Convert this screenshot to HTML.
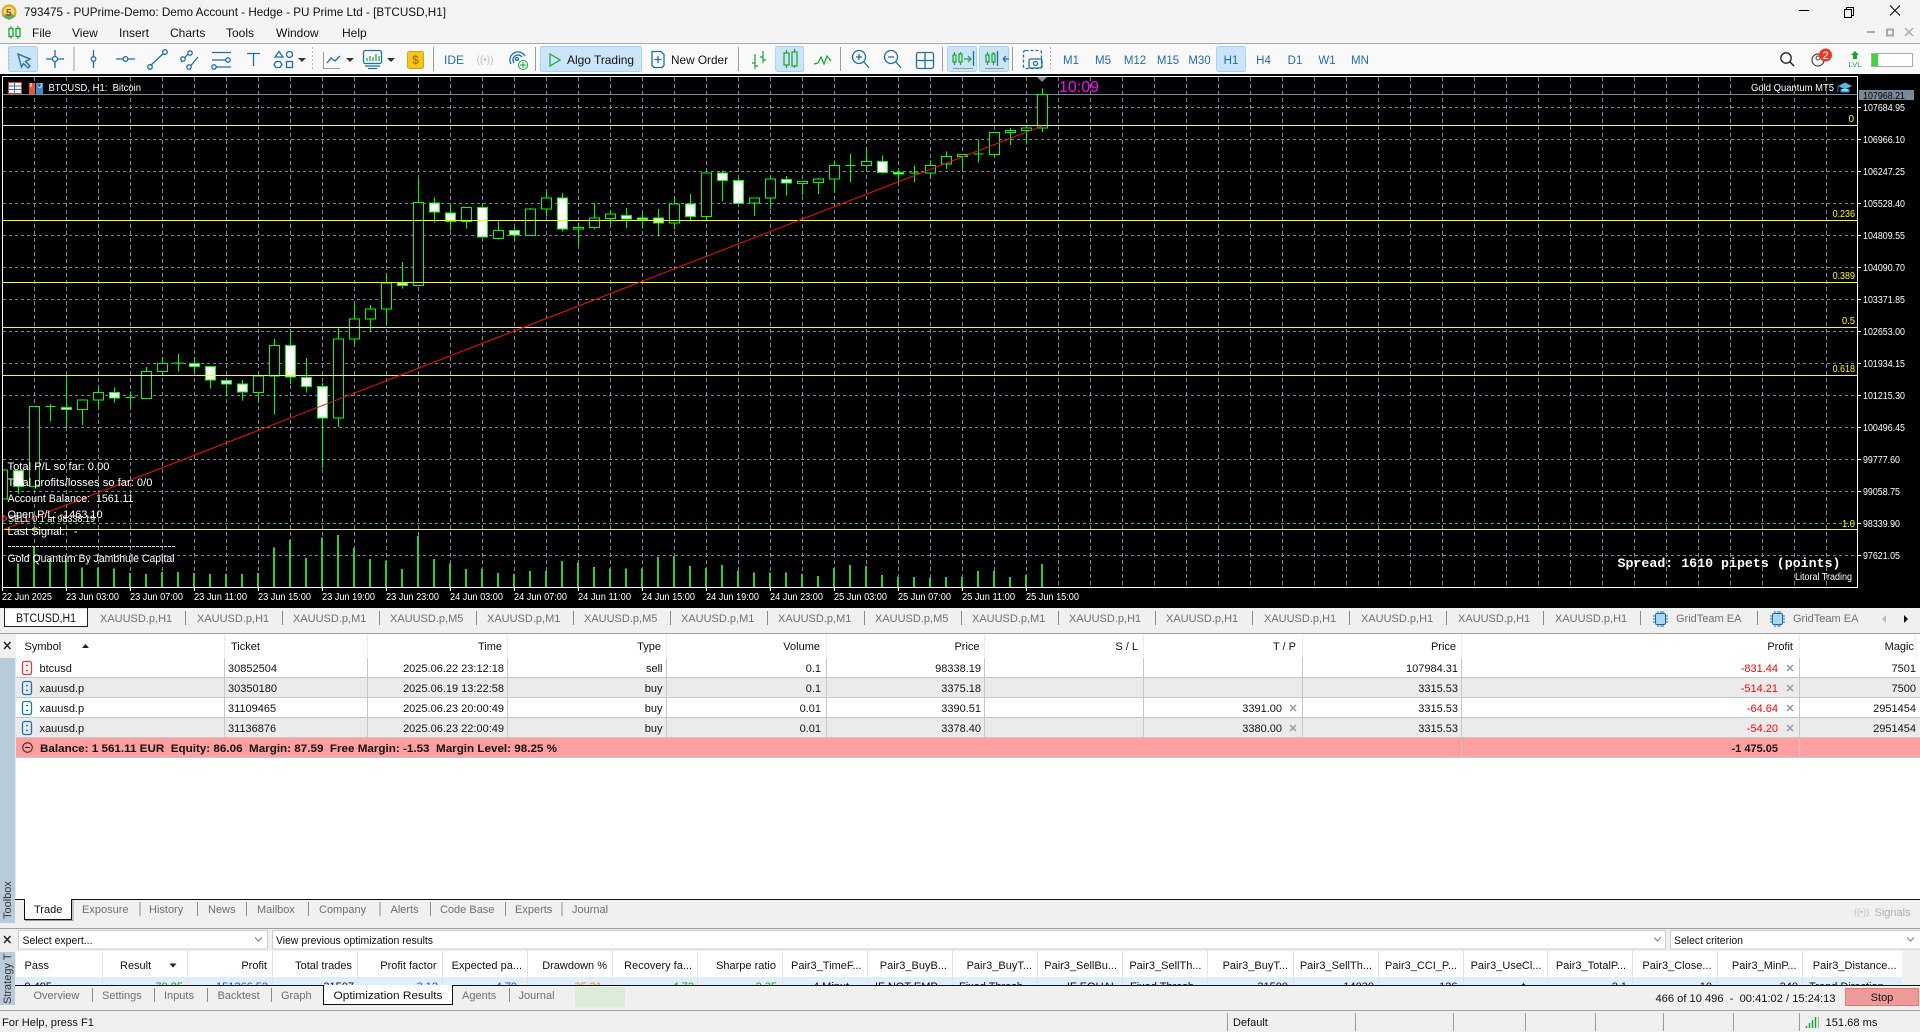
<!DOCTYPE html>
<html lang="en"><head><meta charset="utf-8"><title>793475 - PUPrime-Demo</title>
<style>
html,body{margin:0;padding:0;background:#000;width:1920px;height:1032px;overflow:hidden}
svg{display:block;position:absolute;left:0;top:0}
text{font-family:"Liberation Sans",sans-serif;font-size:11px;fill:#111;white-space:pre}
.e{text-anchor:end}.m{text-anchor:middle}
.g{fill:#6f6f6f}
.w{fill:#fff;font-size:10px}
.n{font-size:12px;fill:#111}
.tf{font-size:11.5px;fill:#1f6ea6}
.y{fill:#ff0;font-size:10px}
.i{fill:none;stroke:#1e6ea7;stroke-width:1.3}
.k{fill:none;stroke:#16a534;stroke-width:1.2}
.ns{vector-effect:non-scaling-stroke;shape-rendering:crispEdges}
.b{font-weight:bold;fill:#111}
</style></head><body>
<svg width="1920" height="1032" viewBox="0 0 1920 1032" xmlns="http://www.w3.org/2000/svg">
<defs>
<pattern id="pv" patternUnits="userSpaceOnUse" x="0" y="77" width="32" height="7"><rect x="2" y="0" width="1" height="4" fill="#778899"/></pattern>
<pattern id="ph" patternUnits="userSpaceOnUse" x="3" y="11" width="6" height="32"><rect x="0" y="0" width="3" height="1" fill="#778899"/></pattern>
<clipPath id="cc"><rect x="3" y="77" width="1854" height="510"/></clipPath>
<clipPath id="cr"><rect x="16" y="977" width="1886" height="8"/></clipPath>
</defs>

<!-- chrome backgrounds -->
<rect x="0" y="0" width="1920" height="23" fill="#f3f3f3"/>
<rect x="0" y="23" width="1920" height="20" fill="#f4f4f4"/>
<rect x="0" y="43" width="1920" height="1" fill="#a8a8a8"/>
<rect x="0" y="44" width="1920" height="30" fill="#f9f9f9"/>
<rect x="0" y="74" width="1920" height="534" fill="#000"/>

<!-- title -->
<circle cx="9" cy="12" r="7.5" fill="#dba920"/><circle cx="9" cy="12" r="5.5" fill="#f3d67a"/><path d="M2 16 L9 20 L16 16 L12 14 L6 14Z" fill="#6aa86a"/>
<text x="6" y="16" style="font-size:10px;font-weight:bold;fill:#7a5a10">5</text>
<text x="24" y="16" textLength="422" lengthAdjust="spacingAndGlyphs" class="n">793475 - PUPrime-Demo: Demo Account - Hedge - PU Prime Ltd - [BTCUSD,H1]</text>
<path d="M1799 10.5H1809" stroke="#000" fill="none"/>
<path d="M1844.5 9.5h7v8h-7zM1846.5 9.5v-2h7v8h-2" stroke="#000" fill="none"/>
<path d="M1890 5.5L1900 15.5M1900 5.5L1890 15.5" stroke="#000" fill="none"/>
<path d="M1867 32H1875" stroke="#aaa" stroke-width="2"/><path d="M1887 29.5h6v6h-6z" stroke="#aaa" stroke-width="2" fill="none"/><path d="M1905 28L1913 36M1913 28L1905 36" stroke="#aaa" stroke-width="1.4"/>

<!-- menu -->
<path d="M11 26V28.5M11 36.5V39M18 26V28.5M18 36.5V39" stroke="#16a534"/><rect x="9" y="28.5" width="4" height="8" fill="none" stroke="#16a534" stroke-width="1.3"/><rect x="16" y="28.5" width="4" height="8" fill="none" stroke="#16a534" stroke-width="1.3"/>
<text x="32" y="37" class="n">File</text><text x="72" y="37" class="n">View</text><text x="119" y="37" class="n">Insert</text><text x="170" y="37" class="n">Charts</text><text x="226" y="37" class="n">Tools</text><text x="276" y="37" class="n">Window</text><text x="342" y="37" class="n">Help</text>

<!-- toolbar buttons -->
<g fill="#cce4f7" stroke="#a9d2f2"><rect x="8.5" y="46.5" width="29" height="25" rx="2"/><rect x="540.5" y="46.5" width="101" height="25" rx="2"/><rect x="775.5" y="46.5" width="28" height="25" rx="2"/><rect x="947.5" y="46.5" width="29" height="25" rx="2"/><rect x="979.5" y="46.5" width="29" height="25" rx="2"/><rect x="1216.5" y="46.5" width="29" height="25" rx="2"/></g>
<g stroke="#9a9a9a"><path d="M74 47V71M433.5 47V71M535.5 47V71M738.5 47V71M840.5 47V71M942.5 47V71M1012.5 47V71"/></g>
<path d="M9 47V71M312.5 47V71M1050.5 47V71" stroke="#bbb" stroke-dasharray="2 2"/>
<g class="i">
<path d="M18 54L30 59L25.5 61.5L30 66L28 68L23.5 63.5L21.5 67Z"/>
<path d="M46 59H64M55 50V68"/><circle cx="55" cy="59" r="2.5" fill="#f9f9f9"/>
<path d="M93.5 50V68"/><circle cx="93.5" cy="59" r="2.3" fill="#f9f9f9"/>
<path d="M116 59H135"/><circle cx="125.5" cy="59" r="2.3" fill="#f9f9f9"/>
<path d="M150 66L165 52"/><circle cx="150" cy="67" r="2.3" fill="#f9f9f9"/><circle cx="165" cy="52" r="2.3" fill="#f9f9f9"/>
<path d="M181 62L188 54M188 69L198 57"/><circle cx="183" cy="59" r="2.2" fill="#f9f9f9"/><circle cx="190" cy="53" r="2.2" fill="#f9f9f9"/><circle cx="189" cy="67" r="2.2" fill="#f9f9f9"/>
<path d="M212 52.5H231M212 60H227M216 67H231"/><circle cx="228" cy="60" r="2.2" fill="#f9f9f9"/><circle cx="214" cy="67" r="2.2" fill="#f9f9f9"/>
<path d="M247 53.5H260M253.5 53.5V66"/>
<path d="M279 51.5L283 57H275Z"/><circle cx="289.5" cy="54.5" r="3"/><path d="M276 61.5h4l2 3-2 3h-4l-2-3z"/><rect x="286.5" y="61.5" width="6" height="6"/>
</g>
<g fill="#333"><path d="M298 58H306L302 62Z"/><path d="M346 58H354L350 62Z"/><path d="M387 58H395L391 62Z"/></g>
<path d="M323.5 52V68.5H340" fill="none" stroke="#999"/>
<path d="M327 63L331 58L335 61L340 56" class="i"/>
<rect x="363.5" y="50.5" width="18" height="13" rx="2" class="i"/><path d="M365 66H380M368 68.5H377" class="i"/><path d="M367 61V58M370 61V56M373 61V57M376 61V54M379 61V56" class="k"/>
<rect x="407.5" y="51.5" width="16" height="17" rx="2" fill="#f7c520" stroke="#dca20c"/><text x="415.5" y="64" class="m" style="font-size:12px;fill:#a87a08;font-weight:bold">$</text>
<text x="444" y="64" class="tf" style="font-size:12px">IDE</text>
<text x="485" y="63" class="m" style="font-size:10px;fill:#bdbdbd">((•))</text>
<path d="M511 64A8 8 0 1 1 525 56M514 63A5 5 0 1 1 522 57" class="i"/><circle cx="517" cy="59" r="1.5" class="i"/><circle cx="523" cy="65" r="4.5" fill="#f9f9f9" stroke="#16a534"/><path d="M523 62V68M520 65H526" stroke="#16a534"/>
<path d="M550 54L560 60L550 66Z" fill="none" stroke="#1fa84c" stroke-width="1.3"/>
<text x="567" y="64" class="n" textLength="67" lengthAdjust="spacingAndGlyphs">Algo Trading</text>
<path d="M652 51.5h9l3 3v11l-2 2h-8l-2-2z" fill="#fff" class="i"/><path d="M658 56V63M654.5 59.5H661.5" class="i"/>
<text x="671" y="64" class="n" textLength="57" lengthAdjust="spacingAndGlyphs">New Order</text>
<path d="M755 54V69M752 63H755M755 66H758M763 51V63M760 57H763M763 60H766" class="k"/>
<g class="k"><path d="M786.5 50V68M794.5 49V68"/><rect x="784" y="53" width="5" height="12" style="fill:#cce4f7"/><rect x="792" y="52" width="5" height="14" style="fill:#cce4f7"/></g>
<path d="M814 64L818 63L821 57L824 64L827 56L831 61" class="k"/>
<g class="i"><circle cx="859" cy="57" r="6.5"/><path d="M864 62L869 68M856 57H862M859 54V60"/><circle cx="891" cy="57" r="6.5"/><path d="M896 62L901 68M888 57H894"/><rect x="916.5" y="52.5" width="17" height="16" rx="2"/><path d="M925 52.5V68.5M916.5 60.5H933.5"/></g>
<g class="k"><path d="M954.5 52V65M960.5 52V65"/><rect x="953" y="55" width="3" height="7" style="fill:#cce4f7"/><rect x="959" y="54" width="3" height="8" style="fill:#cce4f7"/><path d="M964 59H971M968 56L971 59L968 62"/></g><path d="M973.5 51V66" class="i"/><path d="M953 68.5H973" stroke="#999"/>
<g class="k"><path d="M987.5 52V65M993.5 52V65"/><rect x="986" y="55" width="3" height="7" style="fill:#cce4f7"/><rect x="992" y="54" width="3" height="8" style="fill:#cce4f7"/></g><path d="M997.5 51V66M1003 59H1009M1003 59L1006 56M1003 59L1006 62" class="i"/><path d="M985 68.5H1004" stroke="#999"/>
<rect x="1023.5" y="50.5" width="18" height="18" rx="2" class="i" stroke-dasharray="3 2"/><rect x="1029" y="59" width="13" height="9" rx="1.5" fill="#f9f9f9" class="i"/><circle cx="1035.5" cy="63.5" r="2" class="i"/>
<text x="1071" y="64" class="tf m">M1</text><text x="1103" y="64" class="tf m">M5</text><text x="1135" y="64" class="tf m">M12</text><text x="1168" y="64" class="tf m">M15</text><text x="1199.5" y="64" class="tf m">M30</text><text x="1231" y="64" class="tf m">H1</text><text x="1263.5" y="64" class="tf m">H4</text><text x="1295" y="64" class="tf m">D1</text><text x="1327" y="64" class="tf m">W1</text><text x="1360" y="64" class="tf m">MN</text>
<circle cx="1786" cy="58" r="5.2" fill="none" stroke="#222" stroke-width="1.3"/><path d="M1790 62L1794 66" stroke="#222" stroke-width="1.5"/>
<circle cx="1818" cy="60" r="6" fill="none" stroke="#444" stroke-width="1.2"/><circle cx="1818" cy="58" r="2" fill="none" stroke="#444"/><circle cx="1825.5" cy="55" r="6.5" fill="#e5392a"/><text x="1825.5" y="59" class="m" style="fill:#fff;font-size:11px">2</text>
<path d="M1855 51L1859 55H1857V59H1853V55H1851Z" fill="#16a534"/><text x="1855" y="67" class="m" style="font-size:7.5px;fill:#16a534">LVL</text>
<rect x="1871.5" y="53.5" width="41" height="13" fill="#fff" stroke="#aaa"/><rect x="1872" y="54" width="6" height="12" fill="#3cd63c"/>

<!-- chart -->
<rect x="34" y="77" width="1793" height="510" fill="url(#pv)"/>
<rect x="3" y="107" width="1854" height="449" fill="url(#ph)"/>
<path d="M2.5 76.5H1857.5V587.5H2.5Z" fill="none" stroke="#fff"/>
<path d="M3 94.5H1857" stroke="#778899"/>

<g clip-path="url(#cc)">
<!-- volumes -->
<g transform="translate(0,60) scale(1,.357)"><path class="ns" fill="none" stroke="#32cd32" stroke-width="2" d="M18 1410V1477M34 1362V1477M50 1395V1477M66 1395V1477M82 1422V1477M98 1422V1477M114 1425V1477M130 1437V1477M146 1440V1477M162 1434V1477M178 1434V1477M194 1437V1477M210 1440V1477M226 1440V1477M242 1440V1477M258 1437V1477M274 1365V1477M290 1344V1477M306 1395V1477M322 1337V1477M338 1331V1477M354 1367V1477M370 1398V1477M386 1404V1477M402 1426V1477M418 1334V1477M434 1398V1477M450 1410V1477M466 1426V1477M482 1426V1477M498 1437V1477M514 1440V1477M530 1432V1477M546 1432V1477M562 1404V1477M578 1407V1477M594 1420V1477M610 1425V1477M626 1425V1477M642 1425V1477M658 1392V1477M674 1390V1477M690 1417V1477M706 1423V1477M722 1415V1477M738 1431V1477M754 1435V1477M770 1435V1477M786 1435V1477M802 1440V1477M818 1445V1477M834 1423V1477M850 1415V1477M866 1418V1477M882 1443V1477M898 1448V1477M914 1448V1477M930 1450V1477M946 1448V1477M962 1448V1477M978 1432V1477M994 1431V1477M1010 1448V1477M1026 1442V1477M1042 1412V1477"/></g>
<!-- candles -->
<g transform="translate(.5,60) scale(1,.357)" stroke="#00ff00" stroke-width="1">
<path class="ns" fill="none" d="M18 1150V1215M50 963V1013M66 885V1032M82 953V1022M98 918V976M114 918V960M130 928V975M146 860V948M162 833V885M178 824V873M194 833V875M210 859V920M226 898V942M242 897V954M258 885V958M274 782V993M290 762V908M306 835V932M322 905V1143M338 750V1028M354 680V795M370 686V762M386 600V740M402 566V640M418 334V631M434 385V455M450 403V478M466 413V472M498 452V503M514 467V505M530 415V491M546 365V438M562 372V481M578 455V520M594 400V475M610 420V461M626 415V470M642 430V472M658 418V495M674 382V475M690 376V448M706 317V450M722 310V395M738 330V402M754 385V437M770 328V417M786 325V380M802 340V378M818 330V375M834 282V371M850 264V343M866 245V310M882 267V318M898 305V342M914 295V342M930 282V332M946 256V305M962 265V304M978 222V287M994 203V272M1010 190V238M1026 185V236M1042 80V201"/>
<path class="ns" fill="#000" d="M-3 1148H7V1230H-3ZM29 970H39V1195H29ZM77 953H87V979H77ZM93 931H103V953H93ZM141 872H151V948H141ZM157 850H167V873H157ZM253 885H263V931H253ZM269 800H279V885H269ZM333 782H343V1003H333ZM349 726H359V782H349ZM365 698H375V726H365ZM381 625H391V698H381ZM413 399H423V631H413ZM461 413H471V453H461ZM493 477H503V500H493ZM525 418H535V491H525ZM541 387H551V418H541ZM573 469H583V474H573ZM589 443H599V469H589ZM605 432H615V444H605ZM669 404H679V457H669ZM701 317H711V438H701ZM749 387H759V401H749ZM765 334H775V387H765ZM797 340H807V346H797ZM813 334H823V343H813ZM829 295H839V334H829ZM861 285H871V296H861ZM925 295H935V317H925ZM941 271H951V292H941ZM957 265H967V270H957ZM989 203H999V265H989ZM1005 197H1015V203H1005ZM1021 191H1031V197H1021ZM1037 97H1047V191H1037Z"/>
<path class="ns" fill="#fff" d="M13 1150H23V1195H13ZM61 973H71V979H61ZM109 932H119V947H109ZM189 850H199V858H189ZM205 859H215V897H205ZM221 898H231V908H221ZM237 908H247V930H237ZM285 800H295V888H285ZM301 889H311V914H301ZM317 915H327V1003H317ZM397 625H407V631H397ZM429 400H439V426H429ZM445 428H455V452H445ZM477 413H487V496H477ZM509 478H519V490H509ZM557 387H567V474H557ZM621 435H631V446H621ZM637 443H647V447H637ZM653 443H663V457H653ZM685 404H695V438H685ZM717 317H727V338H717ZM733 338H743V402H733ZM781 335H791V345H781ZM877 285H887V315H877ZM893 315H903V320H893Z"/>
<path class="ns" fill="none" d="M45 970H55M125 945H135M173 849H183M909 317H919M845 295H855M973 264H983"/>
</g>
<!-- objects -->
<path d="M3 523.5H1857" stroke="#2fd12f" stroke-dasharray="3 3"/>
<path d="M3 125.5H1857M3 220.5H1857M3 282.5H1857M3 327.5H1857M3 375.5H1857M3 529.5H1857" stroke="#ffff00"/>
<path d="M2 530L1042 126" stroke="#f01010" stroke-width="1"/>
</g>

<!-- chart header -->
<rect x="8.5" y="82.5" width="13" height="11" fill="#fff" stroke="#e03a2a"/><path d="M9 86H21M9 89.5H21M14.5 83V93" stroke="#2a6fc0"/>
<path d="M29 83h6v11h-6z" fill="#e8503a"/><path d="M36 83h7v11h-7z" fill="#3a8dd0"/><path d="M31 87V83M38 87h3v-4" stroke="#fff"/>
<text x="48.5" y="91" class="w" textLength="92.5" lengthAdjust="spacingAndGlyphs">BTCUSD, H1:  Bitcoin</text>
<text x="1059" y="92" textLength="40" lengthAdjust="spacingAndGlyphs" style="font-size:16px;fill:#ff00ff">10:09</text>
<path d="M1037 77H1047L1042 82Z" fill="#778899"/>
<text x="1751" y="91" class="w" textLength="83" lengthAdjust="spacingAndGlyphs">Gold Quantum MT5</text>
<path d="M1838 86L1845 82.5L1852 86L1845 89.5Z" fill="#5ab4e6"/><path d="M1841 89V92H1849V89" fill="#8fd0f0" stroke="#2a7fc0"/><path d="M1838 86V92" stroke="#2a7fc0"/>

<!-- level labels -->
<text x="1854" y="122" class="y e">0</text>
<text x="1855" y="217" class="y e" textLength="22.4" lengthAdjust="spacingAndGlyphs">0.236</text>
<text x="1855" y="279" class="y e" textLength="22.4" lengthAdjust="spacingAndGlyphs">0.389</text>
<text x="1855" y="324" class="y e" textLength="13" lengthAdjust="spacingAndGlyphs">0.5</text>
<text x="1855" y="372" class="y e" textLength="22.4" lengthAdjust="spacingAndGlyphs">0.618</text>
<text x="1855" y="527" class="y e" textLength="13" lengthAdjust="spacingAndGlyphs">1.0</text>

<!-- price axis -->
<path d="M1858 107.5h3M1858 139.5h3M1858 171.5h3M1858 203.5h3M1858 235.5h3M1858 267.5h3M1858 299.5h3M1858 331.5h3M1858 363.5h3M1858 395.5h3M1858 427.5h3M1858 459.5h3M1858 491.5h3M1858 523.5h3M1858 555.5h3" stroke="#fff"/>
<rect x="1859" y="90" width="55" height="10" fill="#778899"/>
<text x="1863" y="99" class="w" textLength="42" lengthAdjust="spacingAndGlyphs" style="fill:#000">107968.21</text>
<g class="w">
<text x="1863" y="111" class="w" textLength="42" lengthAdjust="spacingAndGlyphs">107684.95</text>
<text x="1863" y="143" class="w" textLength="42" lengthAdjust="spacingAndGlyphs">106966.10</text>
<text x="1863" y="175" class="w" textLength="42" lengthAdjust="spacingAndGlyphs">106247.25</text>
<text x="1863" y="207" class="w" textLength="42" lengthAdjust="spacingAndGlyphs">105528.40</text>
<text x="1863" y="239" class="w" textLength="42" lengthAdjust="spacingAndGlyphs">104809.55</text>
<text x="1863" y="271" class="w" textLength="42" lengthAdjust="spacingAndGlyphs">104090.70</text>
<text x="1863" y="303" class="w" textLength="42" lengthAdjust="spacingAndGlyphs">103371.85</text>
<text x="1863" y="335" class="w" textLength="42" lengthAdjust="spacingAndGlyphs">102653.00</text>
<text x="1863" y="367" class="w" textLength="42" lengthAdjust="spacingAndGlyphs">101934.15</text>
<text x="1863" y="399" class="w" textLength="42" lengthAdjust="spacingAndGlyphs">101215.30</text>
<text x="1863" y="431" class="w" textLength="42" lengthAdjust="spacingAndGlyphs">100496.45</text>
<text x="1863" y="463" class="w" textLength="37" lengthAdjust="spacingAndGlyphs">99777.60</text>
<text x="1863" y="495" class="w" textLength="37" lengthAdjust="spacingAndGlyphs">99058.75</text>
<text x="1863" y="527" class="w" textLength="37" lengthAdjust="spacingAndGlyphs">98339.90</text>
<text x="1863" y="559" class="w" textLength="37" lengthAdjust="spacingAndGlyphs">97621.05</text>
</g>

<!-- time axis -->
<path d="M2.5 588v3M66.5 588v3M130.5 588v3M194.5 588v3M258.5 588v3M322.5 588v3M386.5 588v3M450.5 588v3M514.5 588v3M578.5 588v3M642.5 588v3M706.5 588v3M770.5 588v3M834.5 588v3M898.5 588v3M962.5 588v3M1026.5 588v3" stroke="#fff"/>
<text x="2" y="600" class="w" textLength="50" lengthAdjust="spacingAndGlyphs">22 Jun 2025</text>
<text x="66" y="600" class="w" textLength="53" lengthAdjust="spacingAndGlyphs">23 Jun 03:00</text>
<text x="130" y="600" class="w" textLength="53" lengthAdjust="spacingAndGlyphs">23 Jun 07:00</text>
<text x="194" y="600" class="w" textLength="53" lengthAdjust="spacingAndGlyphs">23 Jun 11:00</text>
<text x="258" y="600" class="w" textLength="53" lengthAdjust="spacingAndGlyphs">23 Jun 15:00</text>
<text x="322" y="600" class="w" textLength="53" lengthAdjust="spacingAndGlyphs">23 Jun 19:00</text>
<text x="386" y="600" class="w" textLength="53" lengthAdjust="spacingAndGlyphs">23 Jun 23:00</text>
<text x="450" y="600" class="w" textLength="53" lengthAdjust="spacingAndGlyphs">24 Jun 03:00</text>
<text x="514" y="600" class="w" textLength="53" lengthAdjust="spacingAndGlyphs">24 Jun 07:00</text>
<text x="578" y="600" class="w" textLength="53" lengthAdjust="spacingAndGlyphs">24 Jun 11:00</text>
<text x="642" y="600" class="w" textLength="53" lengthAdjust="spacingAndGlyphs">24 Jun 15:00</text>
<text x="706" y="600" class="w" textLength="53" lengthAdjust="spacingAndGlyphs">24 Jun 19:00</text>
<text x="770" y="600" class="w" textLength="53" lengthAdjust="spacingAndGlyphs">24 Jun 23:00</text>
<text x="834" y="600" class="w" textLength="53" lengthAdjust="spacingAndGlyphs">25 Jun 03:00</text>
<text x="898" y="600" class="w" textLength="53" lengthAdjust="spacingAndGlyphs">25 Jun 07:00</text>
<text x="962" y="600" class="w" textLength="53" lengthAdjust="spacingAndGlyphs">25 Jun 11:00</text>
<text x="1026" y="600" class="w" textLength="53" lengthAdjust="spacingAndGlyphs">25 Jun 15:00</text>

<!-- overlay text -->
<text x="7.5" y="470" class="w" textLength="102" lengthAdjust="spacingAndGlyphs" style="font-size:11px">Total P/L so far: 0.00</text>
<text x="7.5" y="486" class="w" textLength="145" lengthAdjust="spacingAndGlyphs" style="font-size:11px">Total profits/losses so far: 0/0</text>
<text x="7.5" y="502" class="w" textLength="126" lengthAdjust="spacingAndGlyphs" style="font-size:11px">Account Balance:  1561.11</text>
<text x="7.5" y="518" class="w" textLength="95" lengthAdjust="spacingAndGlyphs" style="font-size:11px">Open P/L: -1463.10</text>
<text x="8" y="522" class="w" textLength="87" lengthAdjust="spacingAndGlyphs" style="font-size:9px">SELL 0.1 at 98338.19</text>
<path d="M3 515L7 518.5L3 522Z" fill="none" stroke="#e04040"/>
<text x="7.5" y="535" class="w" textLength="70" lengthAdjust="spacingAndGlyphs" style="font-size:11px">Last Signal:   -</text>
<path d="M8 546.5H176" stroke="#ddd" stroke-dasharray="3 1"/>
<text x="7.5" y="562" class="w" textLength="167" lengthAdjust="spacingAndGlyphs" style="font-size:11px">Gold Quantum By Jambhule Capital</text>
<text x="1617.5" y="567" textLength="223" lengthAdjust="spacingAndGlyphs" style="font-family:'Liberation Mono',monospace;font-weight:bold;font-size:13px;fill:#fff">Spread: 1610 pipets (points)</text>
<text x="1795" y="580" class="w" textLength="57" lengthAdjust="spacingAndGlyphs">Litoral Trading</text>

<!-- chart tabs -->
<rect x="0" y="608" width="1920" height="25" fill="#f0f0f0"/>
<rect x="0" y="633" width="1920" height="1" fill="#a0a0a0"/>
<path d="M4.5 608.5H87.5V626.5H4.5Z" fill="#fff" stroke="#222"/><path d="M5 608.5H87" stroke="#ddd"/>
<text x="16" y="622" textLength="60" lengthAdjust="spacingAndGlyphs" style="font-size:11.5px">BTCUSD,H1</text>
<path d="M185.5 611V625M282.5 611V625M379.5 611V625M476.5 611V625M573.5 611V625M670.5 611V625M767.5 611V625M864.5 611V625M961.5 611V625M1058.5 611V625M1155.5 611V625M1252.5 611V625M1349.5 611V625M1446.5 611V625M1543.5 611V625M1640.5 611V625M1757.5 611V625" stroke="#8a8a8a"/>
<g>
<text x="100" y="622" class="g">XAUUSD.p,H1</text><text x="197" y="622" class="g">XAUUSD.p,H1</text><text x="293" y="622" class="g">XAUUSD.p,M1</text><text x="390" y="622" class="g">XAUUSD.p,M5</text><text x="487" y="622" class="g">XAUUSD.p,M1</text><text x="584" y="622" class="g">XAUUSD.p,M5</text><text x="681" y="622" class="g">XAUUSD.p,M1</text><text x="778" y="622" class="g">XAUUSD.p,M1</text><text x="875" y="622" class="g">XAUUSD.p,M5</text><text x="972" y="622" class="g">XAUUSD.p,M1</text><text x="1069" y="622" class="g">XAUUSD.p,H1</text><text x="1166" y="622" class="g">XAUUSD.p,H1</text><text x="1264" y="622" class="g">XAUUSD.p,H1</text><text x="1361" y="622" class="g">XAUUSD.p,H1</text><text x="1458" y="622" class="g">XAUUSD.p,H1</text><text x="1555" y="622" class="g">XAUUSD.p,H1</text>
<text x="1676" y="622" class="g">GridTeam EA</text><text x="1793" y="622" class="g">GridTeam EA</text>
</g>
<g fill="#a9d8f5" stroke="#1a6aa8"><rect x="1655.5" y="613.5" width="10" height="11" rx="1.5"/><rect x="1772.5" y="613.5" width="10" height="11" rx="1.5"/></g>
<path d="M1653 616h2M1653 619h2M1653 622h2M1666 616h2M1666 619h2M1666 622h2M1658 611v2M1661 611v2M1663 611v2M1658 625v2M1661 625v2M1663 625v2M1770 616h2M1770 619h2M1770 622h2M1783 616h2M1783 619h2M1783 622h2M1775 611v2M1778 611v2M1780 611v2M1775 625v2M1778 625v2M1780 625v2" stroke="#1a6aa8"/>
<path d="M1886 615V623L1882 619Z" fill="#bbb"/><path d="M1904 615V623L1908 619Z" fill="#111"/>

<!-- toolbox table -->
<rect x="0" y="634" width="1920" height="265" fill="#fff"/>
<rect x="0" y="634" width="16" height="24" fill="#f0f0f0"/>
<rect x="15" y="658" width="1" height="265" fill="#e8e8e8"/>
<path d="M4 642L10.5 649M10.5 642L4 649" stroke="#222" stroke-width="1.5"/>
<rect x="16" y="678" width="1904" height="19" fill="#ebebeb"/>
<rect x="16" y="718" width="1904" height="19" fill="#ebebeb"/>
<rect x="16" y="738" width="1904" height="19" fill="#ff9f9f"/>
<path d="M16 677.5H1920M16 697.5H1920M16 717.5H1920M16 737.5H1920M16 757.5H1920" stroke="#c8c8c8"/>
<path d="M224.5 634V658M367.5 634V658M507.5 634V658M666.5 634V658M826.5 634V658M984.5 634V658M1143.5 634V658M1302.5 634V658M1461.5 634V658M1799.5 634V658M1915.5 634V658" stroke="#ececec"/>
<path d="M224.5 658V737M367.5 658V737M507.5 658V737M666.5 658V737M826.5 658V737M984.5 658V737M1143.5 658V737M1302.5 658V737M1461.5 658V757M1799.5 658V757" stroke="#c8c8c8"/>
<text x="24.5" y="650">Symbol</text><path d="M82 648L85.5 644L89 648Z" fill="#222"/>
<text x="231" y="650">Ticket</text><text x="502" y="650" class="e">Time</text><text x="661" y="650" class="e">Type</text><text x="820" y="650" class="e">Volume</text><text x="979.5" y="650" class="e">Price</text><text x="1138" y="650" class="e">S / L</text><text x="1296" y="650" class="e">T / P</text><text x="1456" y="650" class="e">Price</text><text x="1793" y="650" class="e">Profit</text><text x="1914" y="650" class="e">Magic</text>

<g fill="none" stroke-width="1.3">
<rect x="22.5" y="661.5" width="9" height="13" rx="2" stroke="#e03a3a"/><path d="M26 665.5H28M26 670.5H28" stroke="#e03a3a"/>
<rect x="22.5" y="681.5" width="9" height="13" rx="2" stroke="#1a73b8"/><path d="M26 685.5H28M26 690.5H28" stroke="#1a73b8"/>
<rect x="22.5" y="701.5" width="9" height="13" rx="2" stroke="#1a73b8"/><path d="M26 705.5H28M26 710.5H28" stroke="#1a73b8"/>
<rect x="22.5" y="721.5" width="9" height="13" rx="2" stroke="#1a73b8"/><path d="M26 725.5H28M26 730.5H28" stroke="#1a73b8"/>
</g>
<text x="39.5" y="672">btcusd</text><text x="228" y="672">30852504</text><text x="504" y="672" class="e">2025.06.22 23:12:18</text><text x="662.5" y="672" class="e">sell</text><text x="821" y="672" class="e">0.1</text><text x="981" y="672" class="e">98338.19</text><text x="1458" y="672" class="e">107984.31</text><text x="1778" y="672" class="e" style="fill:#f00">-831.44</text><text x="1916" y="672" class="e">7501</text>
<text x="39.5" y="692">xauusd.p</text><text x="228" y="692">30350180</text><text x="504" y="692" class="e">2025.06.19 13:22:58</text><text x="662.5" y="692" class="e">buy</text><text x="821" y="692" class="e">0.1</text><text x="981" y="692" class="e">3375.18</text><text x="1458" y="692" class="e">3315.53</text><text x="1778" y="692" class="e" style="fill:#f00">-514.21</text><text x="1916" y="692" class="e">7500</text>
<text x="39.5" y="712">xauusd.p</text><text x="228" y="712">31109465</text><text x="504" y="712" class="e">2025.06.23 20:00:49</text><text x="662.5" y="712" class="e">buy</text><text x="821" y="712" class="e">0.01</text><text x="981" y="712" class="e">3390.51</text><text x="1282" y="712" class="e">3391.00</text><text x="1458" y="712" class="e">3315.53</text><text x="1778" y="712" class="e" style="fill:#f00">-64.64</text><text x="1916" y="712" class="e">2951454</text>
<text x="39.5" y="732">xauusd.p</text><text x="228" y="732">31136876</text><text x="504" y="732" class="e">2025.06.23 22:00:49</text><text x="662.5" y="732" class="e">buy</text><text x="821" y="732" class="e">0.01</text><text x="981" y="732" class="e">3378.40</text><text x="1282" y="732" class="e">3380.00</text><text x="1458" y="732" class="e">3315.53</text><text x="1778" y="732" class="e" style="fill:#f00">-54.20</text><text x="1916" y="732" class="e">2951454</text>
<path d="M1787 665L1793 671M1793 665L1787 671M1787 685L1793 691M1793 685L1787 691M1787 705L1793 711M1793 705L1787 711M1787 725L1793 731M1793 725L1787 731M1290 705L1296 711M1296 705L1290 711M1290 725L1296 731M1296 725L1290 731" stroke="#999" stroke-width="1.5"/>
<circle cx="27.5" cy="747.5" r="4.8" fill="none" stroke="#222"/><path d="M25 747.5H30" stroke="#222"/>
<text x="40" y="752" class="b" textLength="517" lengthAdjust="spacingAndGlyphs">Balance: 1 561.11 EUR  Equity: 86.06  Margin: 87.59  Free Margin: -1.53  Margin Level: 98.25 %</text>
<text x="1778" y="752" class="e b">-1 475.05</text>

<!-- toolbox tabs -->
<rect x="0" y="899" width="1920" height="29" fill="#f0f0f0"/>
<rect x="0" y="658" width="15" height="265" fill="#b9cadb"/>
<rect x="15" y="899" width="1905" height="1" fill="#111"/>
<path d="M24.5 899V919.5H71.5V899" fill="#fff" stroke="#111"/><path d="M25 920.5H73V900" stroke="#999" fill="none"/><rect x="25" y="899" width="46" height="2" fill="#fff"/>
<text x="34" y="913">Trade</text>
<text x="82" y="913" class="g">Exposure</text><text x="149" y="913" class="g">History</text><text x="208" y="913" class="g">News</text><text x="257" y="913" class="g">Mailbox</text><text x="319" y="913" class="g">Company</text><text x="390.5" y="913" class="g">Alerts</text><text x="440" y="913" class="g">Code Base</text><text x="515" y="913" class="g">Experts</text><text x="572" y="913" class="g">Journal</text>
<path d="M140 902V916M197.5 902V916M246.5 902V916M308.5 902V916M380 902V916M430.5 902V916M505.5 902V916M562 902V916" stroke="#8a8a8a"/>
<text x="1854" y="915" style="font-size:9px;fill:#bbb">((•))</text><text x="1874.5" y="916" style="fill:#b0b0b0">Signals</text>
<text transform="translate(11,919) rotate(-90)" style="fill:#333">Toolbox</text>

<!-- strategy tester -->
<rect x="0" y="928" width="1920" height="104" fill="#f0f0f0"/>
<rect x="0" y="928" width="1920" height="1" fill="#a0a0a0"/>
<path d="M4 936L10.5 943M10.5 936L4 943" stroke="#222" stroke-width="1.5"/>
<g fill="#fff" stroke="#ccc"><rect x="18.5" y="930.5" width="249" height="18.5" rx="1"/><rect x="272.5" y="930.5" width="1393" height="18.5" rx="1"/><rect x="1670.5" y="930.5" width="252" height="18.5" rx="1"/></g>
<text x="22.5" y="944" textLength="70" lengthAdjust="spacingAndGlyphs">Select expert...</text>
<text x="276" y="944" textLength="157" lengthAdjust="spacingAndGlyphs">View previous optimization results</text>
<text x="1674" y="944" textLength="69" lengthAdjust="spacingAndGlyphs">Select criterion</text>
<path d="M255 937.5L258.5 941L262 937.5M1654 937.5L1657.5 941L1661 937.5M1907 937.5L1910.5 941L1914 937.5" fill="none" stroke="#777"/>
<rect x="16" y="951" width="1886" height="26" fill="#fff"/>
<rect x="16" y="977" width="1886" height="8" fill="#dfeefa"/>
<path d="M102.5 951V985M187.5 951V985M272.5 951V985M357.5 951V985M442.5 951V985M527.5 951V985M612.5 951V985M697.5 951V985M782.5 951V985M867.5 951V985M952.5 951V985M1037.5 951V985M1122.5 951V985M1207.5 951V985M1293.5 951V985M1378.5 951V985M1463.5 951V985M1547.5 951V985M1632.5 951V985M1717.5 951V985M1802.5 951V985" stroke="#e2e2e2"/>
<text x="24.5" y="969">Pass</text><text x="120" y="969">Result</text><path d="M169.5 963.5H176.5L173 967.5Z" fill="#222"/>
<text x="267" y="969" class="e">Profit</text><text x="352" y="969" class="e">Total trades</text><text x="436.5" y="969" class="e">Profit factor</text><text x="522" y="969" class="e">Expected pa...</text><text x="607" y="969" class="e">Drawdown %</text><text x="692" y="969" class="e">Recovery fa...</text><text x="776" y="969" class="e">Sharpe ratio</text><text x="861.5" y="969" class="e">Pair3_TimeF...</text><text x="947" y="969" class="e">Pair3_BuyB...</text><text x="1032" y="969" class="e">Pair3_BuyT...</text><text x="1117" y="969" class="e">Pair3_SellBu...</text><text x="1201.5" y="969" class="e">Pair3_SellTh...</text><text x="1288" y="969" class="e">Pair3_BuyT...</text><text x="1372" y="969" class="e">Pair3_SellTh...</text><text x="1457" y="969" class="e">Pair3_CCI_P...</text><text x="1541.5" y="969" class="e">Pair3_UseCl...</text><text x="1626" y="969" class="e">Pair3_TotalP...</text><text x="1711.5" y="969" class="e">Pair3_Close...</text><text x="1796.5" y="969" class="e">Pair3_MinP...</text><text x="1896.5" y="969" class="e">Pair3_Distance...</text>
<g clip-path="url(#cr)">
<text x="24.5" y="990">9 495</text><text x="183" y="990" class="e" style="fill:#1aa01a">79.85</text><text x="268" y="990" class="e" style="fill:#1a4fe0">151266.52</text><text x="354" y="990" class="e">31507</text><text x="438" y="990" class="e" style="fill:#1a4fe0">3.12</text><text x="517" y="990" class="e" style="fill:#1a4fe0">4.79</text><text x="602" y="990" class="e" style="fill:#e08a1a">35.31</text><text x="694" y="990" class="e" style="fill:#1aa01a">4.73</text><text x="777" y="990" class="e" style="fill:#1aa01a">2.35</text><text x="813" y="990">4 Minut</text><text x="875" y="990">IF NOT EMP</text><text x="959" y="990">Fixed Thresh</text><text x="1117" y="990" class="e">IF EQUAL</text><text x="1130" y="990">Fixed Thresh</text><text x="1288" y="990" class="e">31500</text><text x="1374" y="990" class="e">14030</text><text x="1457.5" y="990" class="e">126</text><text x="1525" y="990" class="e">t</text><text x="1627" y="990" class="e">2.1</text><text x="1712" y="990" class="e">10</text><text x="1798" y="990" class="e">240</text><text x="1809" y="990">Trend Direction</text>
</g>
<rect x="0" y="952" width="15" height="53" fill="#b9cadb"/>
<text transform="translate(11,1004) rotate(-90)" style="fill:#333">Strategy T</text>
<rect x="16" y="985" width="1904" height="25" fill="#f0f0f0"/>
<rect x="15" y="985" width="1905" height="1" fill="#111"/>
<path d="M323.5 985V1004.5H452.5V985" fill="#fff" stroke="#111"/><rect x="324" y="985" width="128" height="2" fill="#fff"/>
<text x="333.5" y="999" textLength="109" lengthAdjust="spacingAndGlyphs">Optimization Results</text>
<text x="33.5" y="999" class="g">Overview</text><text x="102" y="999" class="g">Settings</text><text x="164" y="999" class="g">Inputs</text><text x="217.5" y="999" class="g">Backtest</text><text x="281" y="999" class="g">Graph</text><text x="462" y="999" class="g">Agents</text><text x="518.5" y="999" class="g">Journal</text>
<path d="M92.5 988V1002M154.5 988V1002M207.5 988V1002M271.5 988V1002M509.5 988V1002" stroke="#8a8a8a"/>
<rect x="575" y="987" width="50" height="20" fill="#dcecd7"/>
<text x="1655.5" y="1002" textLength="180" lengthAdjust="spacingAndGlyphs">466 of 10 496  -  00:41:02 / 15:24:13</text>
<rect x="1845.5" y="988.5" width="73" height="17" fill="#ee9a9a" stroke="#e07878"/>
<text x="1882" y="1001" class="m">Stop</text>

<!-- status bar -->
<rect x="0" y="1010" width="1920" height="1" fill="#a0a0a0"/>
<text x="2" y="1026" textLength="92" lengthAdjust="spacingAndGlyphs">For Help, press F1</text>
<text x="1233" y="1026">Default</text>
<path d="M1227.5 1013V1031M1355.5 1013V1031M1453.5 1013V1031M1525.5 1013V1031M1595.5 1013V1031M1663.5 1013V1031M1733.5 1013V1031M1799.5 1013V1031" stroke="#9a9a9a"/>
<path d="M1806.5 1026V1028M1809.5 1023V1028M1812.5 1020V1028M1815.5 1017V1028" stroke="#16a534" stroke-width="1.5"/>
<path d="M1818.5 1017V1028" stroke="#aaa"/>
<text x="1825.5" y="1026" textLength="52" lengthAdjust="spacingAndGlyphs">151.68 ms</text>
</svg>
</body></html>
